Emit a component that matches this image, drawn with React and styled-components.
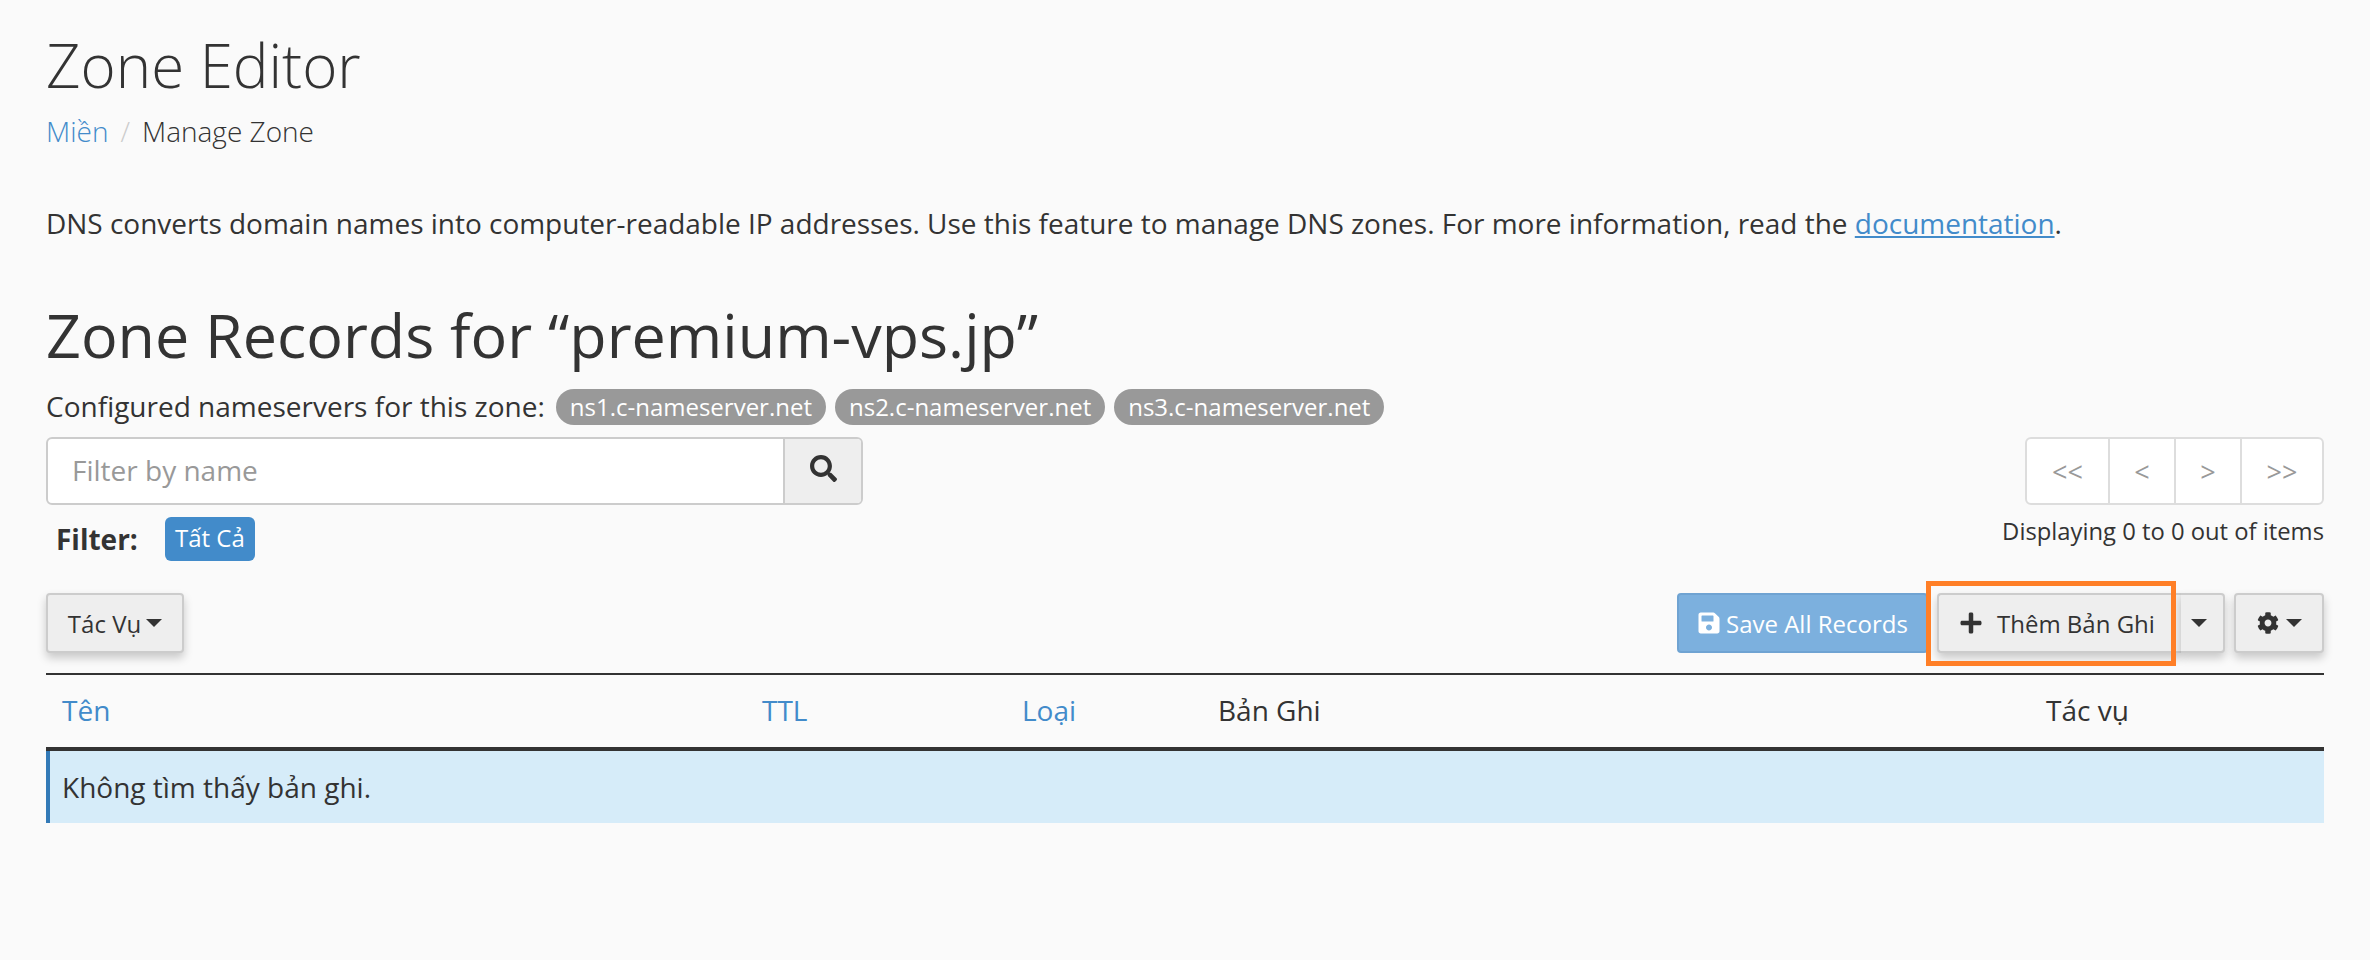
import React from "react";
import styled, { createGlobalStyle } from "styled-components";
import { FaSearch, FaSave, FaPlus, FaCog } from "react-icons/fa";

const Global = createGlobalStyle`
  html, body { margin: 0; padding: 0; background: #fafafa; }
  body { font-family: "Open Sans", "Noto Sans", sans-serif; color: #333; font-size: 28px; }
  * { box-sizing: border-box; }
`;

const Page = styled.div`
  padding: 32px 46px 0;
  min-height: 960px;
`;
const Title = styled.h1`
  margin: 0;
  font-size: 60px;
  line-height: 66px;
  font-weight: 300;
  color: #333;
`;
const Crumbs = styled.nav`
  margin-top: 13px;
  display: flex;
  line-height: 40px;
  font-weight: 300;
`;
const CrumbLink = styled.a`
  color: #428bca;
`;
const Sep = styled.span`
  color: #ccc;
  padding: 0 12px;
`;
const Intro = styled.p`
  margin: 52px 0 0;
  line-height: 40px;
  font-size: 27.98px;
`;
const DocLink = styled.a`
  color: #428bca;
  text-decoration: underline;
`;
const Heading = styled.h2`
  margin: 59px 0 0;
  font-size: 61px;
  line-height: 66px;
  font-weight: 400;
`;
const NsRow = styled.div`
  margin-top: 21px;
  height: 36px;
  display: flex;
  align-items: center;
  gap: 9px;
  font-size: 28px;
`;
const NsLabel = styled.span`
  margin-right: 2px;
  padding-bottom: 2px;
`;
const Badge = styled.span`
  height: 36px;
  line-height: 36px;
  padding: 0 14px;
  border-radius: 18px;
  background: #999;
  color: #fff;
  font-size: 24px;
`;
const TopBar = styled.div`
  margin-top: 12px;
  display: flex;
  justify-content: space-between;
`;
const LeftCol = styled.div`
  width: 817px;
`;
const Search = styled.div`
  display: flex;
  height: 68px;
  border: 2px solid #ccc;
  border-radius: 6px;
  background: #fff;
  overflow: hidden;
`;
const SearchInput = styled.input`
  flex: 1;
  min-width: 0;
  border: 0;
  outline: 0;
  padding: 0 24px 2px;
  font: inherit;
  background: transparent;
  &::placeholder { color: #999; opacity: 1; }
`;
const SearchBtn = styled.button`
  width: 78px;
  border: 0;
  border-left: 2px solid #ccc;
  background: #eee;
  color: #333;
  font-size: 27px;
  display: flex;
  align-items: center;
  justify-content: center;
  padding: 0 0 6px;
`;
const FilterRow = styled.div`
  margin-top: 12px;
  display: flex;
  align-items: center;
  height: 44px;
  padding-left: 10px;
`;
const FilterLabel = styled.strong`
  font-weight: 700;
  font-size: 28px;
  margin-right: 27px;
`;
const FilterChip = styled.span`
  width: 90px;
  height: 44px;
  line-height: 42px;
  text-align: center;
  border-radius: 6px;
  background: #428bca;
  color: #fff;
  font-size: 24px;
`;
const RightCol = styled.div`
  display: flex;
  flex-direction: column;
  align-items: flex-end;
`;
const Pager = styled.div`
  display: flex;
  height: 68px;
  border: 2px solid #ddd;
  border-radius: 6px;
  background: #fff;
  overflow: hidden;
`;
const PagerBtn = styled.span`
  width: ${(p) => p.$w}px;
  display: flex;
  align-items: center;
  justify-content: center;
  color: #999;
  font-size: 27px;
  & + & { border-left: 2px solid #ddd; }
`;
const Count = styled.div`
  margin-top: 7px;
  margin-bottom: 1px;
  font-size: 23.8px;
  line-height: 38px;
`;
const Actions = styled.div`
  margin-top: 32px;
  display: flex;
  justify-content: space-between;
  height: 60px;
`;
const RightActions = styled.div`
  position: relative;
  display: flex;
`;
const Btn = styled.button`
  height: 60px;
  width: ${(p) => (p.$w ? `${p.$w}px` : "auto")};
  display: inline-flex;
  align-items: center;
  justify-content: center;
  gap: ${(p) => p.$gap || 6}px;
  padding: 0 ${(p) => p.$px ?? 20}px;
  font-family: inherit;
  font-size: 24px;
  color: #333;
  background: #eee;
  border: 2px solid #ccc;
  border-radius: 4px;
  box-shadow: 0 5px 10px rgba(0, 0, 0, 0.2);
`;
const SaveBtn = styled.button`
  height: 60px;
  width: 251px;
  margin-right: 9px;
  display: inline-flex;
  align-items: center;
  gap: 5px;
  padding: 0 0 0 18px;
  font-family: inherit;
  font-size: 24px;
  color: #fff;
  background: #7cb0de;
  border: 2px solid #6fa3d2;
  border-radius: 4px;
`;
const SplitGroup = styled.div`
  display: flex;
  margin-right: 9px;
`;
const MainSplit = styled(Btn)`
  width: 244px;
  border-right: 0;
  border-radius: 4px 0 0 4px;
  justify-content: flex-start;
`;
const CaretSplit = styled(Btn)`
  width: 44px;
  padding-right: 6px;
  border-left: 0;
  border-radius: 0 4px 4px 0;
`;
const Caret = styled.span`
  display: inline-block;
  border-top: 8px solid #333;
  border-left: 8px solid transparent;
  border-right: 8px solid transparent;
`;
const Highlight = styled.div`
  position: absolute;
  left: 249px;
  top: -12px;
  width: 250px;
  height: 85px;
  border: 5px solid #ff7f27;
  pointer-events: none;
`;
const TableHead = styled.div`
  margin-top: 20px;
  display: grid;
  grid-template-columns: 700px 260px 196px 828px 1fr;
  height: 78px;
  border-top: 2px solid #333;
  border-bottom: 4px solid #333;
  align-items: center;
`;
const Th = styled.div`
  padding: 0 0 2px 16px;
  color: ${(p) => (p.$link ? "#428bca" : "#333")};
`;
const EmptyRow = styled.div`
  height: 72px;
  line-height: 72px;
  background: #d6ecf9;
  border-left: 4px solid #337ab7;
  padding-left: 12px;
`;

export default function App() {
  return (
    <Page>
      <Global />
      <Title>Zone Editor</Title>
      <Crumbs>
        <CrumbLink>Miền</CrumbLink>
        <Sep>/</Sep>
        <span>Manage Zone</span>
      </Crumbs>
      <Intro>
        DNS converts domain names into computer-readable IP addresses. Use this feature to manage DNS zones. For more information, read the <DocLink>documentation</DocLink>.
      </Intro>
      <Heading>Zone Records for “premium-vps.jp”</Heading>
      <NsRow>
        <NsLabel>Configured nameservers for this zone:</NsLabel>
        <Badge>ns1.c-nameserver.net</Badge>
        <Badge>ns2.c-nameserver.net</Badge>
        <Badge>ns3.c-nameserver.net</Badge>
      </NsRow>
      <TopBar>
        <LeftCol>
          <Search>
            <SearchInput placeholder="Filter by name" />
            <SearchBtn><FaSearch /></SearchBtn>
          </Search>
          <FilterRow>
            <FilterLabel>Filter:</FilterLabel>
            <FilterChip>Tất Cả</FilterChip>
          </FilterRow>
        </LeftCol>
        <RightCol>
          <Pager>
            <PagerBtn $w={81}>&lt;&lt;</PagerBtn>
            <PagerBtn $w={66}>&lt;</PagerBtn>
            <PagerBtn $w={66}>&gt;</PagerBtn>
            <PagerBtn $w={82}>&gt;&gt;</PagerBtn>
          </Pager>
          <Count>Displaying 0 to 0 out of items</Count>
        </RightCol>
      </TopBar>
      <Actions>
        <Btn $w={138} $px={0} $gap={5}>Tác Vụ <Caret /></Btn>
        <RightActions>
          <SaveBtn><FaSave /> Save All Records</SaveBtn>
          <SplitGroup>
            <MainSplit $gap={14}><FaPlus /> Thêm Bản Ghi</MainSplit>
            <CaretSplit $px={0}><Caret /></CaretSplit>
          </SplitGroup>
          <Btn $w={90} $px={0} $gap={7}><FaCog size={22} /><Caret /></Btn>
          <Highlight />
        </RightActions>
      </Actions>
      <TableHead>
        <Th $link>Tên</Th>
        <Th $link>TTL</Th>
        <Th $link>Loại</Th>
        <Th>Bản Ghi</Th>
        <Th>Tác vụ</Th>
      </TableHead>
      <EmptyRow>Không tìm thấy bản ghi.</EmptyRow>
    </Page>
  );
}
